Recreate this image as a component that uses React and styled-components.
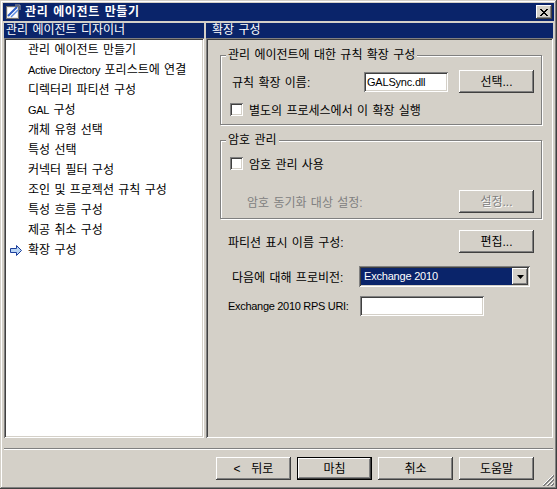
import React from "react";
import styled, { createGlobalStyle } from "styled-components";

const face = "#D4D0C8";
const navy = "#0A246A";

const raised = `
  box-shadow: inset -1px -1px #404040, inset 1px 1px #fff,
    inset -2px -2px #808080, inset 2px 2px ${face};
`;
const sunken = `
  box-shadow: inset 1px 1px #808080, inset -1px -1px #fff,
    inset 2px 2px #404040, inset -2px -2px ${face};
`;

const GlobalStyle = createGlobalStyle`
  html, body {
    margin: 0;
    padding: 0;
    background: ${face};
  }
  body {
    font-family: "Liberation Sans", "Noto Sans CJK KR", sans-serif;
    font-size: 12px;
    word-spacing: 1px;
    color: #000;
  }
`;

const Window = styled.div`
  position: relative;
  width: 557px;
  height: 489px;
  box-sizing: border-box;
  padding: 3px;
  background: ${face};
  box-shadow: inset -1px -1px #404040, inset 1px 1px ${face},
    inset -2px -2px #808080, inset 2px 2px #fff;
  display: flex;
  flex-direction: column;
`;

const TitleBar = styled.div`
  height: 18px;
  background: ${navy};
  display: flex;
  align-items: center;
  padding-left: 2px;
  gap: 4px;
`;

const TitleText = styled.div`
  flex: 1;
  color: #fff;
  font-weight: bold;
  line-height: 18px;
  letter-spacing: 0.6px;
`;

const CloseButton = styled.div`
  width: 16px;
  height: 14px;
  margin-right: 2px;
  background: ${face};
  ${raised}
  display: flex;
  align-items: center;
  justify-content: center;
`;

const Main = styled.div`
  margin: 2px 1px 0;
  height: 415px;
  display: flex;
  gap: 2px;
`;

const Pane = styled.div`
  display: flex;
  flex-direction: column;
  width: ${(p) => p.$width || "auto"};
  flex: ${(p) => (p.$width ? "none" : "1")};
`;

const PaneHeader = styled.div`
  height: 15px;
  line-height: 15px;
  background: ${navy};
  color: #fff;
  padding-left: ${(p) => p.$indent}px;
  white-space: nowrap;
`;

const List = styled.div`
  flex: 1;
  background: #fff;
  ${sunken}
  padding: 2px;
`;

const ListItem = styled.div`
  height: 20px;
  line-height: 20px;
  display: flex;
  align-items: center;
  white-space: pre;
`;

const ItemMark = styled.span`
  width: 22px;
  height: 20px;
  display: flex;
  align-items: center;
  padding-left: 4px;
  box-sizing: border-box;
`;

const Content = styled.div`
  flex: 1;
  background: ${face};
  ${sunken}
  padding: 2px;
  display: flex;
  flex-direction: column;
`;

const Group = styled.div`
  position: relative;
  margin: 15px 9px 0 12px;
  border: 1px solid #808080;
  box-shadow: inset 1px 1px #fff, 1px 1px #fff;
  padding: ${(p) => p.$pad};
  display: flex;
  flex-direction: column;
`;

const Legend = styled.div`
  position: absolute;
  top: -8px;
  left: 5px;
  padding: 0 2px;
  line-height: 14px;
  background: ${face};
  white-space: nowrap;
`;

const Row = styled.div`
  display: flex;
  align-items: center;
  margin: ${(p) => p.$margin || "0"};
`;

const Label = styled.span`
  width: ${(p) => (p.$width ? `${p.$width}px` : "auto")};
  flex: none;
  margin-left: ${(p) => p.$indent || 0}px;
  color: ${(p) => (p.$disabled ? "#808080" : "#000")};
  white-space: nowrap;
`;

const Latin = styled.span`
  font-size: 11px;
  letter-spacing: -0.3px;
  word-spacing: 0;
`;

const TextBox = styled.div`
  width: ${(p) => p.$width}px;
  height: 20px;
  box-sizing: border-box;
  background: #fff;
  ${sunken}
  padding: 0 3px;
  line-height: 20px;
  font-size: 11px;
  letter-spacing: -0.2px;
  white-space: nowrap;
  overflow: hidden;
`;

const Button = styled.button`
  width: 75px;
  height: 23px;
  box-sizing: border-box;
  flex: none;
  border: none;
  padding: 0;
  margin-left: ${(p) => p.$gap || "0"};
  background: ${face};
  font: inherit;
  word-spacing: 2px;
  line-height: 1;
  color: ${(p) => (p.disabled ? "#808080" : "#000")};
  text-shadow: ${(p) => (p.disabled ? "1px 1px #fff" : "none")};
  box-shadow: ${(p) =>
    p.$default
      ? `inset 0 0 0 1px #000, inset -2px -2px #404040, inset 2px 2px #fff, inset -3px -3px #808080`
      : `inset -1px -1px #404040, inset 1px 1px #fff, inset -2px -2px #808080, inset 2px 2px ${face}`};
`;

const CheckRow = styled.label`
  display: flex;
  align-items: center;
  gap: 6px;
  height: 13px;
  white-space: nowrap;
  margin: ${(p) => p.$margin || "0"};
`;

const CheckBox = styled.span`
  width: 13px;
  height: 13px;
  box-sizing: border-box;
  background: #fff;
  ${sunken}
`;

const Select = styled.div`
  width: 171px;
  height: 21px;
  box-sizing: border-box;
  padding: 2px;
  background: #fff;
  ${sunken}
  display: flex;
`;

const SelectValue = styled.div`
  flex: 1;
  background: ${navy};
  color: #fff;
  font-size: 11px;
  letter-spacing: -0.2px;
  word-spacing: 0;
  line-height: 17px;
  padding-left: 3px;
`;

const DropButton = styled.div`
  width: 16px;
  background: ${face};
  ${raised}
  display: flex;
  align-items: center;
  justify-content: center;
`;

const Separator = styled.div`
  margin: 10px 1px 0;
  border-top: 1px solid #808080;
  border-bottom: 1px solid #fff;
`;

const Footer = styled.div`
  margin-top: 7px;
  display: flex;
  justify-content: flex-end;
  gap: 6px;
  padding-right: 20px;
`;

const Grip = styled.svg`
  position: absolute;
  right: 3px;
  bottom: 3px;
`;

const TitleIcon = () => (
  <svg width="16" height="16" viewBox="0 0 16 16">
    <rect x="1.5" y="2.5" width="12" height="12" fill="#e8e8e8" stroke="#707070" />
    <rect x="3" y="4" width="9" height="9" fill="#fff" />
    <path d="M3 12 L12 3" stroke="#2a5cc8" strokeWidth="2" />
    <path d="M6 13 L13 6" stroke="#5a8ae0" strokeWidth="1.5" />
    <path d="M10 1 L15 1 L15 6" fill="none" stroke="#a0a0a0" />
  </svg>
);

const Arrow = () => (
  <svg width="12" height="11" viewBox="0 0 12 11">
    <path
      d="M0.5 3.5 H6.5 V0.5 L11.5 5.5 L6.5 10.5 V7.5 H0.5 Z"
      fill="#b8d4f4"
      stroke="#1c3f9c"
    />
  </svg>
);

const steps = [
  "관리 에이전트 만들기",
  <>
    <Latin>Active Directory</Latin>
    {" 포리스트에 연결"}
  </>,
  "디렉터리 파티션 구성",
  <>
    <Latin>GAL</Latin>
    {" 구성"}
  </>,
  "개체 유형 선택",
  "특성 선택",
  "커넥터 필터 구성",
  "조인 및 프로젝션 규칙 구성",
  "특성 흐름 구성",
  "제공 취소 구성",
  "확장 구성",
];

export default function App() {
  return (
    <>
      <GlobalStyle />
      <Window>
        <TitleBar>
          <TitleIcon />
          <TitleText>관리 에이전트 만들기</TitleText>
          <CloseButton>
            <svg width="8" height="7" viewBox="0 0 8 7">
              <path d="M0 0 L7 7 M1 0 L8 7 M7 0 L0 7 M8 0 L1 7" stroke="#000" strokeWidth="1" />
            </svg>
          </CloseButton>
        </TitleBar>

        <Main>
          <Pane $width="200px">
            <PaneHeader $indent={2}>관리 에이전트 디자이너</PaneHeader>
            <List>
              {steps.map((s, i) => (
                <ListItem key={i}>
                  <ItemMark>{i === steps.length - 1 && <Arrow />}</ItemMark>
                  {s}
                </ListItem>
              ))}
            </List>
          </Pane>

          <Pane>
            <PaneHeader $indent={6}>확장 구성</PaneHeader>
            <Content>
              <Group $pad="14px 7px 8px 9px">
                <Legend>관리 에이전트에 대한 규칙 확장 구성</Legend>
                <Row>
                  <Label $width={132} $indent={2}>
                    규칙 확장 이름:
                  </Label>
                  <TextBox $width={84}>GALSync.dll</TextBox>
                  <Button $gap="11px">선택...</Button>
                </Row>
                <CheckRow $margin="10px 0 0">
                  <CheckBox />
                  별도의 프로세스에서 이 확장 실행
                </CheckRow>
              </Group>

              <Group $pad="16px 7px 5px 9px">
                <Legend>암호 관리</Legend>
                <CheckRow>
                  <CheckBox />
                  암호 관리 사용
                </CheckRow>
                <Row $margin="20px 0 0">
                  <Label $indent={17} $disabled>
                    암호 동기화 대상 설정:
                  </Label>
                  <Button disabled $gap="auto">
                    설정...
                  </Button>
                </Row>
              </Group>

              <Row $margin="11px 17px 0 20px">
                <Label>파티션 표시 이름 구성:</Label>
                <Button $gap="auto">편집...</Button>
              </Row>

              <Row $margin="13px 0 0 24px">
                <Label $width={127}>다음에 대해 프로비전:</Label>
                <Select>
                  <SelectValue>Exchange 2010</SelectValue>
                  <DropButton>
                    <svg width="7" height="4" viewBox="0 0 7 4">
                      <path d="M0 0 H7 L3.5 4 Z" fill="#000" />
                    </svg>
                  </DropButton>
                </Select>
              </Row>

              <Row $margin="9px 0 0 20px">
                <Label $width={132}>
                  <Latin>Exchange 2010 RPS URI:</Latin>
                </Label>
                <TextBox $width={124} />
              </Row>
            </Content>
          </Pane>
        </Main>

        <Separator />

        <Footer>
          <Button>&lt;&nbsp; 뒤로</Button>
          <Button $default>마침</Button>
          <Button>취소</Button>
          <Button>도움말</Button>
        </Footer>

        <Grip width="12" height="12" viewBox="0 0 12 12">
          <path d="M11 1 L1 11 M11 5 L5 11 M11 9 L9 11" stroke="#fff" />
          <path d="M12 1 L1 12 M12 2 L2 12 M12 5 L5 12 M12 6 L6 12 M12 9 L9 12 M12 10 L10 12" stroke="#808080" />
        </Grip>
      </Window>
    </>
  );
}
